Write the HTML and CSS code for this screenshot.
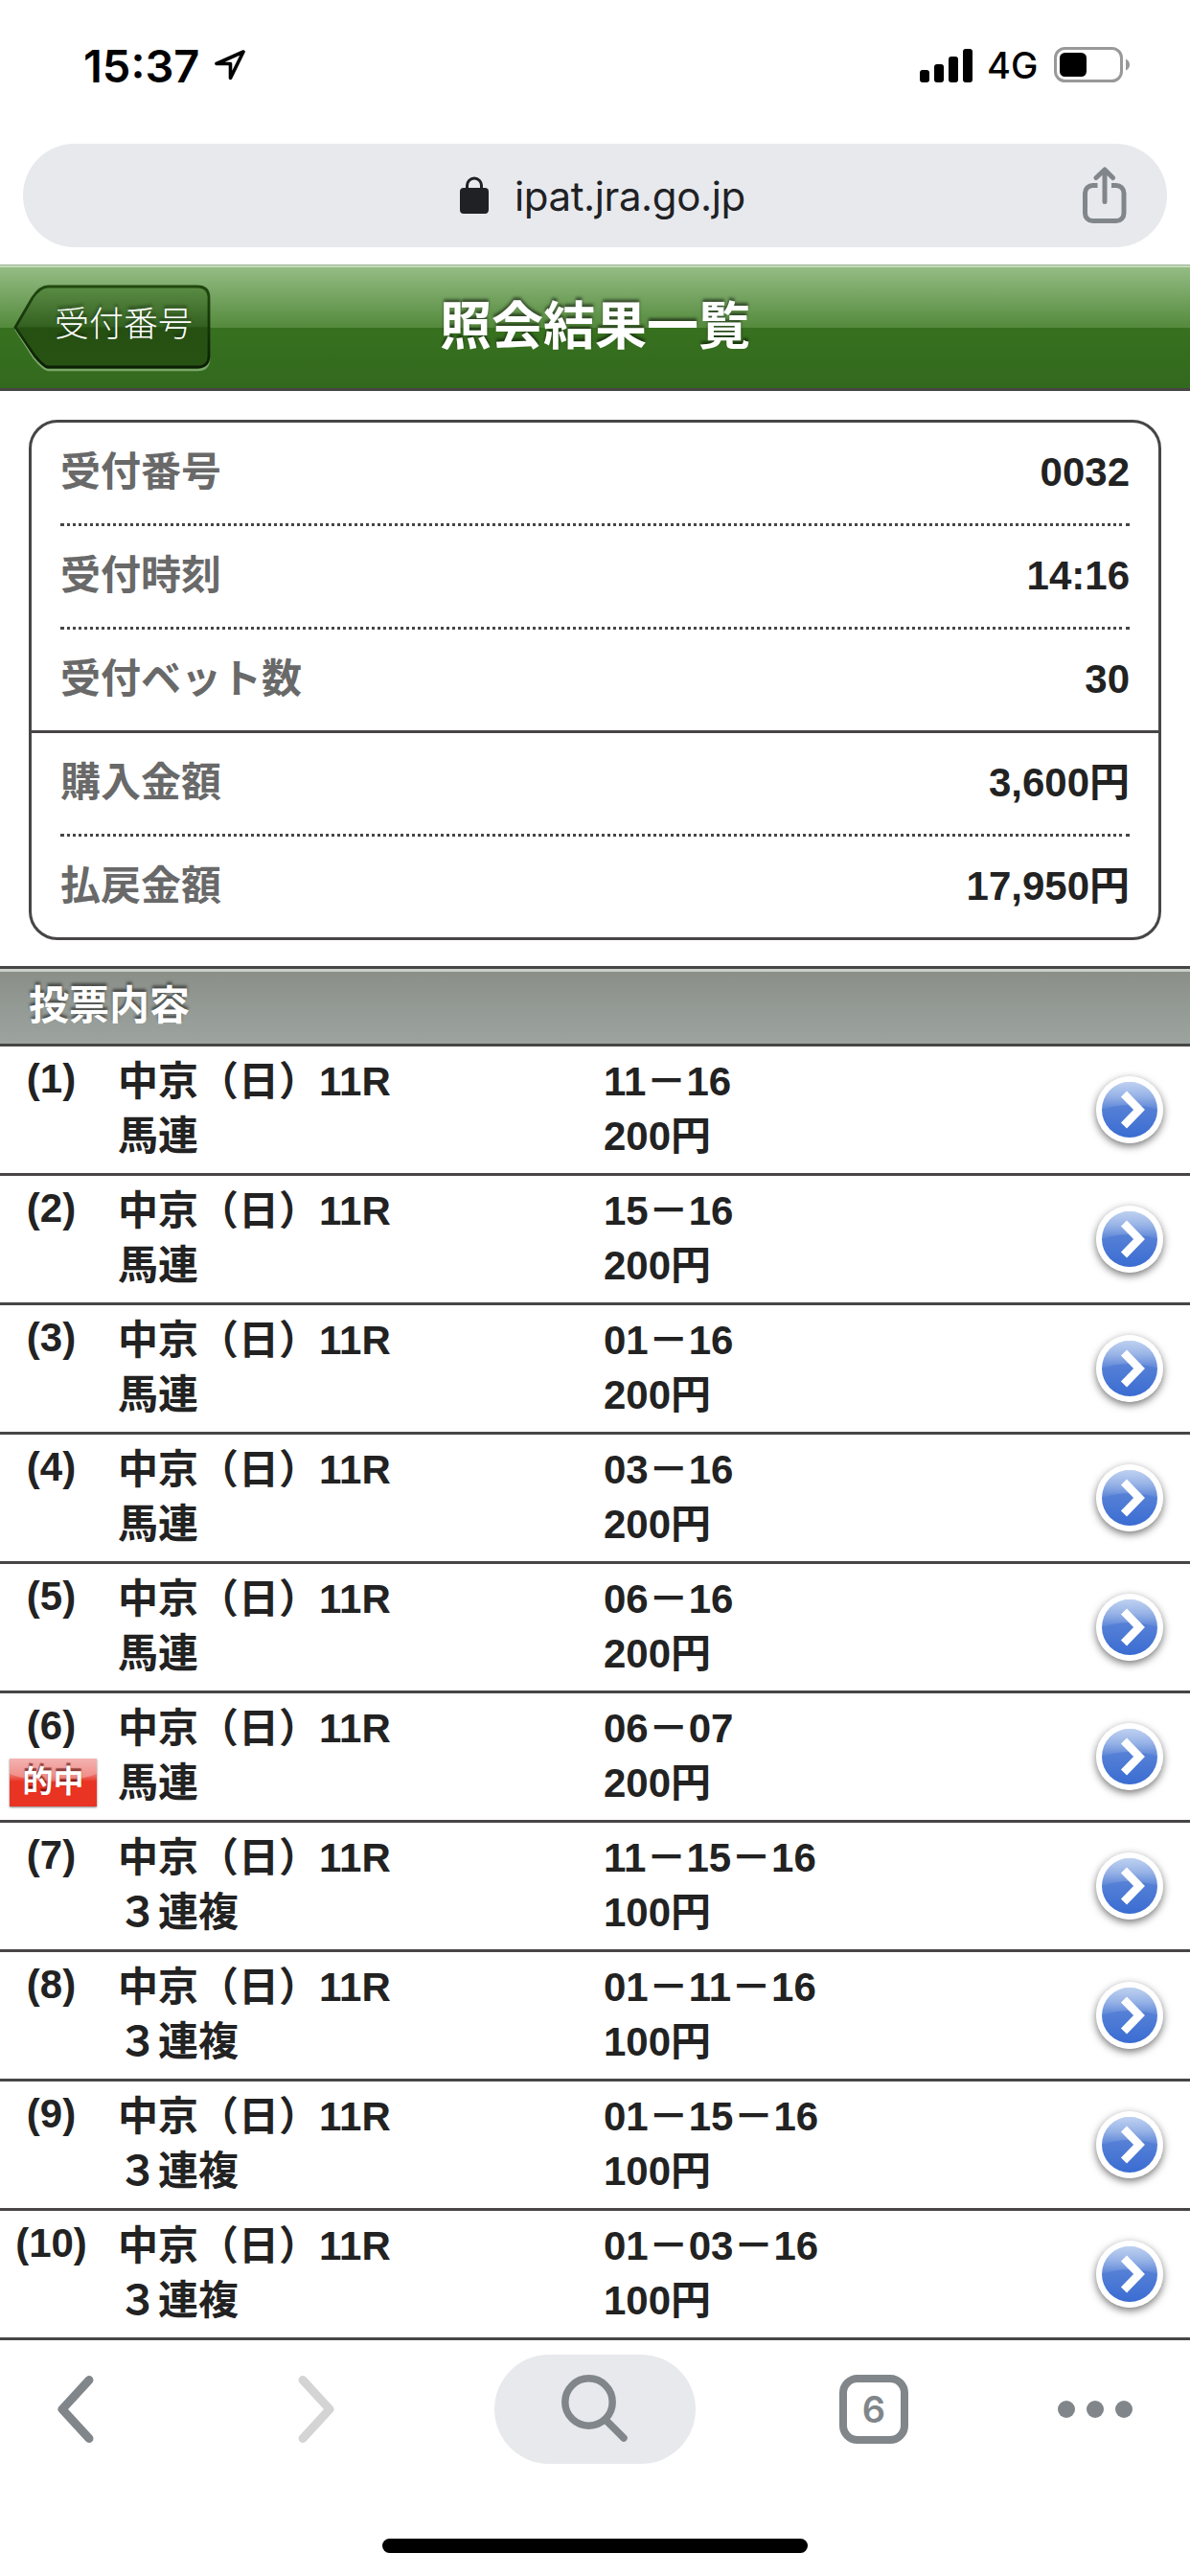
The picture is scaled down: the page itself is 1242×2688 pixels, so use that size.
FILE: index.html
```html
<!DOCTYPE html>
<html lang="ja">
<head>
    <meta charset="UTF-8">
    <meta name="viewport" content="width=device-width, initial-scale=1.0">
    <title>照会結果一覧</title>
    <link rel="stylesheet" href="styles.css">
</head>
<body>
    <!-- shared arrow button icon -->
    <svg class="defs" width="0" height="0">
        <defs>
            <linearGradient id="blue" x1="0" y1="0" x2="0" y2="1">
                <stop offset="0" stop-color="#6f98de"/>
                <stop offset="0.45" stop-color="#5580d6"/>
                <stop offset="1" stop-color="#3a6cd2"/>
            </linearGradient>
            <linearGradient id="gloss" x1="0" y1="0" x2="0" y2="1">
                <stop offset="0" stop-color="#fff" stop-opacity="0.55"/>
                <stop offset="0.5" stop-color="#fff" stop-opacity="0.35"/>
                <stop offset="1" stop-color="#fff" stop-opacity="0.04"/>
            </linearGradient>
            <symbol id="arrow" viewBox="0 0 70 70">
                <circle cx="35" cy="35" r="35" fill="#fff"/>
                <circle cx="35" cy="35" r="29" fill="url(#blue)"/>
                <path d="M6 35a29 29 0 0 1 58 0Q35 25 6 35z" fill="url(#gloss)"/>
                <path d="M29 18.500L45 35L29 51.500" fill="none" stroke="#fff" stroke-width="8.500"/>
            </symbol>
        </defs>
    </svg>

    <div class="status-bar">
        <div class="clock">15:37</div>
        <svg class="location" width="34" height="34" viewBox="0 0 34 34">
            <path d="M31 3L3 15.500H17.500V30.500z" fill="none" stroke="#000" stroke-width="3.600" stroke-linejoin="round"/>
        </svg>
        <div class="status-right">
            <svg width="55" height="35" viewBox="0 0 55 35">
                <rect x="0" y="22" width="10" height="13" rx="3"/>
                <rect x="15" y="16" width="10" height="19" rx="3"/>
                <rect x="30" y="8" width="10" height="27" rx="3"/>
                <rect x="45" y="0" width="10" height="35" rx="3"/>
            </svg>
            <span class="network">4G</span>
            <svg width="80" height="38" viewBox="0 0 80 38">
                <rect x="1.500" y="1.500" width="69" height="34" rx="10" fill="none" stroke="#999" stroke-width="3"/>
                <rect x="6" y="6" width="28" height="25" rx="5.500"/>
                <path d="M75 12.500q4 2 4 6t-4 6z" fill="#999"/>
            </svg>
        </div>
    </div>

    <div class="url-bar">
        <svg class="lock" width="30" height="40" viewBox="0 0 30 40">
            <rect x="0" y="12" width="30" height="27" rx="4" fill="#202124"/>
            <path d="M7.500 14V9.500a7.500 7.500 0 0 1 15 0V14" fill="none" stroke="#202124" stroke-width="3"/>
        </svg>
        <span class="url">ipat.jra.go.jp</span>
        <svg class="share" width="46" height="60" viewBox="0 0 46 60">
            <g fill="none" stroke="#80868a" stroke-width="5" stroke-linecap="round" stroke-linejoin="round">
                <path d="M15.500 19.500H10.500a8 8 0 0 0-8 8V48.500a8 8 0 0 0 8 8H35a8 8 0 0 0 8-8V27.500a8 8 0 0 0-8-8H30" stroke-linecap="butt"/>
                <path d="M23 36.500V4M14 11.500L23 3L31.500 11.500"/>
            </g>
        </svg>
    </div>

    <div class="header">
        <a class="back">
            <svg class="back-shape" width="206" height="92" viewBox="0 0 206 92">
                <defs>
                    <linearGradient id="back" x1="0" y1="0" x2="0" y2="1">
                        <stop offset="0" stop-color="#5b8c45"/>
                        <stop offset="0.5" stop-color="#336120"/>
                        <stop offset="0.51" stop-color="#265012"/>
                        <stop offset="1" stop-color="#275214"/>
                    </linearGradient>
                    <linearGradient id="edge" x1="0" y1="0" x2="0" y2="1">
                        <stop offset="0" stop-color="#20480f"/>
                        <stop offset="1" stop-color="#0b1f04"/>
                    </linearGradient>
                </defs>
                <path d="M2 46L22 77Q32 89 36 89H192Q204 89 204 77" fill="none" stroke="#7ba76a" stroke-width="2.500"/>
                <path d="M2 44.500L20 13.500Q28 2 36 2H192Q204 2 204 14V74Q204 86 192 86H36Q32 86 22 74z" fill="url(#back)" stroke="url(#edge)" stroke-width="2.800"/>
            </svg>
            <span class="back-text">受付番号</span>
        </a>
        <h1>照会結果一覧</h1>
    </div>

    <div class="summary">
        <dl><dt>受付番号</dt><dd>0032</dd></dl>
        <dl><dt>受付時刻</dt><dd>14:16</dd></dl>
        <dl><dt>受付ベット数</dt><dd>30</dd></dl>
        <dl><dt>購入金額</dt><dd>3,600円</dd></dl>
        <dl><dt>払戻金額</dt><dd>17,950円</dd></dl>
    </div>

    <h2>投票内容</h2>

    <div class="bets">
        <div class="bet">
            <div class="no">(1)</div>
            <div class="race">中京（日）11R<br>馬連</div>
            <div class="pick">11－16<br>200円</div>
            <svg class="go"><use href="#arrow"/></svg>
        </div>
        <div class="bet">
            <div class="no">(2)</div>
            <div class="race">中京（日）11R<br>馬連</div>
            <div class="pick">15－16<br>200円</div>
            <svg class="go"><use href="#arrow"/></svg>
        </div>
        <div class="bet">
            <div class="no">(3)</div>
            <div class="race">中京（日）11R<br>馬連</div>
            <div class="pick">01－16<br>200円</div>
            <svg class="go"><use href="#arrow"/></svg>
        </div>
        <div class="bet">
            <div class="no">(4)</div>
            <div class="race">中京（日）11R<br>馬連</div>
            <div class="pick">03－16<br>200円</div>
            <svg class="go"><use href="#arrow"/></svg>
        </div>
        <div class="bet">
            <div class="no">(5)</div>
            <div class="race">中京（日）11R<br>馬連</div>
            <div class="pick">06－16<br>200円</div>
            <svg class="go"><use href="#arrow"/></svg>
        </div>
        <div class="bet">
            <div class="no">(6)<span class="hit">的中</span></div>
            <div class="race">中京（日）11R<br>馬連</div>
            <div class="pick">06－07<br>200円</div>
            <svg class="go"><use href="#arrow"/></svg>
        </div>
        <div class="bet">
            <div class="no">(7)</div>
            <div class="race">中京（日）11R<br>３連複</div>
            <div class="pick">11－15－16<br>100円</div>
            <svg class="go"><use href="#arrow"/></svg>
        </div>
        <div class="bet">
            <div class="no">(8)</div>
            <div class="race">中京（日）11R<br>３連複</div>
            <div class="pick">01－11－16<br>100円</div>
            <svg class="go"><use href="#arrow"/></svg>
        </div>
        <div class="bet">
            <div class="no">(9)</div>
            <div class="race">中京（日）11R<br>３連複</div>
            <div class="pick">01－15－16<br>100円</div>
            <svg class="go"><use href="#arrow"/></svg>
        </div>
        <div class="bet">
            <div class="no">(10)</div>
            <div class="race">中京（日）11R<br>３連複</div>
            <div class="pick">01－03－16<br>100円</div>
            <svg class="go"><use href="#arrow"/></svg>
        </div>
    </div>

    <div class="toolbar">
        <svg class="prev" width="38" height="72" viewBox="0 0 38 72">
            <path d="M33 5.500L5 36L33 66.500" fill="none" stroke="#80868a" stroke-width="9" stroke-linecap="round" stroke-linejoin="round"/>
        </svg>
        <svg class="next" width="38" height="72" viewBox="0 0 38 72">
            <path d="M5 5.500L33 36L5 66.500" fill="none" stroke="#d4d4d4" stroke-width="9" stroke-linecap="round" stroke-linejoin="round"/>
        </svg>
        <div class="search">
            <svg width="72" height="72" viewBox="0 0 72 72">
                <g fill="none" stroke="#80868a" stroke-width="7.500" stroke-linecap="round">
                    <circle cx="29.500" cy="28.500" r="24.700"/>
                    <path d="M47.500 47.500L66 66"/>
                </g>
            </svg>
        </div>
        <div class="tabs">6</div>
        <div class="more"><i></i><i></i><i></i></div>
    </div>
    <div class="home-bar"></div>
</body>
</html>
```
FILE: styles.css
```css
:root {
    --line: #474545;
    --text: #222;
    --label: #696969;
    --pill: #e8e9ed;
    --icon: #80868a;
}

* {
    box-sizing: border-box;
}

body {
    margin: 0;
    width: 1242px;
    height: 2688px;
    overflow: hidden;
    background: #fff;
    color: var(--text);
    font-family: "Liberation Sans", "Noto Sans CJK JP", sans-serif;
    font-size: 42px;
    font-weight: bold;
}

svg {
    display: block;
    flex: none;
}

.defs {
    position: absolute;
}

/* browser chrome */
.status-bar {
    display: flex;
    align-items: center;
    height: 150px;
    padding: 0 62px 14px 87px;
    color: #000;
    font-family: Inter, sans-serif;
}

.clock {
    width: 136px;
    font-size: 47px;
    font-weight: 600;
}

.status-right {
    display: flex;
    align-items: center;
    margin-left: auto;
}

.network {
    width: 70px;
    margin-left: 15px;
    font-size: 38px;
    font-weight: 500;
}

.url-bar {
    display: flex;
    align-items: center;
    height: 108px;
    margin: 0 24px 18px;
    padding: 0 42px 0 456px;
    border-radius: 54px;
    background: var(--pill);
    color: #202124;
    font-family: Inter, sans-serif;
    font-weight: 400;
}

.url {
    margin-left: 27px;
    font-size: 42px;
    letter-spacing: -0.4px;
}

.share {
    margin-left: auto;
}

/* page header */
.header {
    display: flex;
    position: relative;
    justify-content: center;
    height: 132px;
    border-top: 1px solid #9ab593;
    border-bottom: 3px solid var(--line);
    background: linear-gradient(#c6dcbe 2px, #94bc84 2px, #548a3c 65px, #37711f 65px, #33691e);
}

.back {
    position: absolute;
    left: 14px;
    top: 20px;
    width: 206px;
    height: 92px;
}

.back-shape {
    position: absolute;
}

.back-text {
    position: relative;
    display: block;
    padding-left: 43px;
    color: #fff;
    font-size: 36px;
    font-weight: 300;
    line-height: 83px;
    text-shadow: 0 -3px 3px rgba(0, 0, 0, 0.4);
}

h1 {
    margin: 0;
    color: #fff;
    font-size: 54px;
    line-height: 128px;
    text-shadow: 0 -3px 3px rgba(0, 0, 0, 0.5);
}

/* receipt summary */
.summary {
    margin: 30px 30px 27px;
    border: 3px solid var(--line);
    border-radius: 30px;
}

dl {
    display: flex;
    justify-content: space-between;
    height: 108px;
    margin: 0 30px;
    border-bottom: 3px dotted var(--line);
    line-height: 103px;
}

dl:nth-child(3) {
    margin: 0;
    padding: 0 30px;
    border-bottom: 3px solid var(--line);
}

dl:last-child {
    height: 105px;
    border-bottom: none;
}

dt {
    color: var(--label);
}

dd {
    margin: 0;
}

/* bet list */
h2 {
    height: 84px;
    margin: 0;
    padding-left: 30px;
    border-top: 3px solid var(--line);
    border-bottom: 3px solid var(--line);
    background: linear-gradient(#c9d1ca 3px, #8a8f88 3px, #9da4a0);
    color: #fff;
    font-size: 42px;
    line-height: 77px;
    text-shadow: 0 -3px 3px rgba(0, 0, 0, 0.5);
}

.bet {
    display: flex;
    align-items: flex-start;
    height: 135px;
    border-bottom: 3px solid var(--line);
    line-height: 57px;
}

.no {
    position: relative;
    width: 107px;
    padding-top: 5px;
    text-align: center;
}

.race {
    width: 523px;
    padding: 8px 0 0 16px;
}

.pick {
    width: 514px;
    padding-top: 8px;
}

.go {
    width: 70px;
    height: 70px;
    margin-top: 31px;
    border-radius: 50%;
    box-shadow: 0 3px 8px rgba(0, 0, 0, 0.55);
}

.hit {
    position: absolute;
    left: 10px;
    top: 68px;
    width: 91px;
    height: 50px;
    background:
        radial-gradient(ellipse 62px 24px at 50% 0, rgba(255, 255, 255, 0.25) 97%, transparent),
        linear-gradient(#f09a98, #ec6b64 18px, #e93323 24px);
    box-shadow: 0 1px 2px rgba(0, 0, 0, 0.5);
    color: #fff;
    font-size: 32px;
    line-height: 49px;
    text-shadow: 0 -3px 1px rgba(80, 0, 0, 0.6);
}

/* bottom toolbar */
.toolbar {
    display: flex;
    align-items: center;
    height: 144px;
    padding-left: 60px;
}

.next {
    margin-left: 213px;
}

.search {
    width: 210px;
    height: 114px;
    margin-left: 167px;
    padding: 21px 0 0 69px;
    border-radius: 57px;
    background: var(--pill);
}

.tabs {
    width: 72px;
    height: 72px;
    margin-left: 150px;
    border: 8px solid var(--icon);
    border-radius: 19px;
    color: var(--icon);
    font-family: Inter, sans-serif;
    font-size: 38px;
    font-weight: 600;
    line-height: 56px;
    text-align: center;
}

.more {
    display: flex;
    gap: 12px;
    margin-left: 156px;
}

.more i {
    width: 18px;
    height: 18px;
    border-radius: 50%;
    background: var(--icon);
}

.home-bar {
    width: 444px;
    height: 15px;
    margin: 63px auto 0;
    border-radius: 8px;
    background: #000;
}
```
